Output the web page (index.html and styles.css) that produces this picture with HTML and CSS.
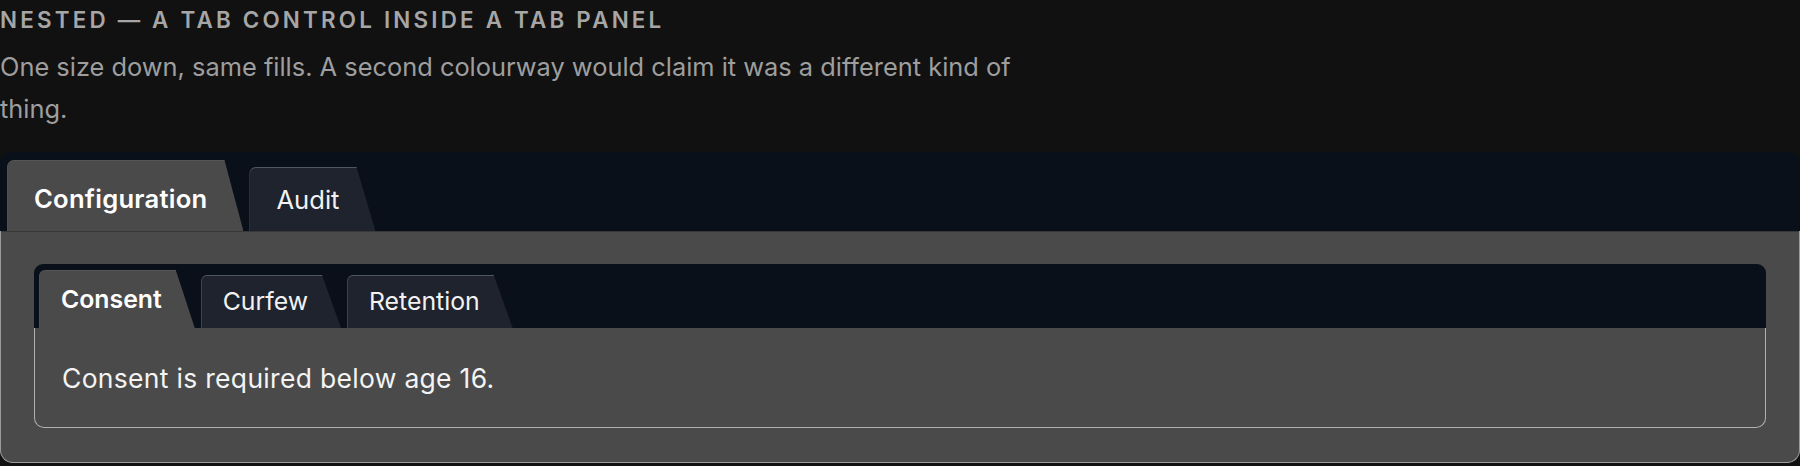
FILE: index.html
```html
<!DOCTYPE html>
<html lang="en">
<head>
<meta charset="utf-8">
<title>Nested tabs</title>
<link rel="stylesheet" href="styles.css">
</head>
<body>
<section class="demo">
  <h2 class="demo-title">Nested — a tab control inside a tab panel</h2>
  <p class="demo-text">One size down, same fills. A second colourway would claim it was a different kind of thing.</p>

  <div class="tabs">
    <div class="tablist" role="tablist">
      <button class="tab active" role="tab" aria-selected="true">Configuration</button>
      <button class="tab" role="tab" aria-selected="false">Audit</button>
    </div>
    <div class="panel" role="tabpanel">
      <div class="tabs tabs-sm">
        <div class="tablist" role="tablist">
          <button class="tab active" role="tab" aria-selected="true">Consent</button>
          <button class="tab" role="tab" aria-selected="false">Curfew</button>
          <button class="tab" role="tab" aria-selected="false">Retention</button>
        </div>
        <div class="panel" role="tabpanel">
          <p class="panel-text">Consent is required below age 16.</p>
        </div>
      </div>
    </div>
  </div>
</section>
</body>
</html>
```

FILE: styles.css
```css
* { box-sizing: border-box; }

html, body {
  margin: 0;
  padding: 0;
  background: #111111;
}

body {
  font-family: Inter, "Noto Sans", sans-serif;
  color: #eeeeee;
}

.demo {
  width: 1800px;
}

.demo-title {
  margin: 0;
  padding-top: 6px;
  font-size: 22.4px;
  line-height: 28px;
  font-weight: 600;
  letter-spacing: 3.2px;
  text-transform: uppercase;
  color: #a6a6a6;
}

.demo-text {
  margin: 12px 0 0;
  max-width: 1040px;
  font-size: 25.4px;
  line-height: 42px;
  color: #9e9e9e;
}

.tabs {
  margin-top: 22px;
}

.tablist {
  display: flex;
  align-items: flex-end;
  gap: 6px;
  height: 79px;
  padding: 0 6px 0 7px;
  background: #0a1019;
  border-radius: 10px 10px 0 0;
}

.tab {
  display: flex;
  align-items: flex-end;
  height: 64px;
  margin: 0;
  padding: 0 36px 18px 26px;
  font-family: inherit;
  font-size: 25.6px;
  line-height: 1;
  font-weight: 400;
  color: #f2f2f2;
  background: #1f232d;
  border: 0;
  border-top: 1px solid #505663;
  border-left: 1px solid #3d434e;
  border-top-left-radius: 7px;
  clip-path: polygon(0 0, calc(100% - 19px) 0, 100% 100%, 0 100%);
  cursor: pointer;
}

.tab.active {
  height: 71px;
  padding-bottom: 19px;
  font-weight: 600;
  letter-spacing: 0.25px;
  color: #ffffff;
  background: #4a4a4a;
  border-top-color: #555555;
  border-left-color: #505050;
}

.panel {
  background: #4a4a4a;
  border: 1px solid #9c9c9c;
  border-top: 0;
  border-radius: 0 0 13px 13px;
  padding: 33px 33px 34px 33px;
  box-shadow: inset 0 1px 0 #383838;
}

.tabs-sm {
  margin-top: 0;
}

.tabs-sm .tablist {
  height: 64px;
  gap: 6px;
  padding: 0 5px;
  border-radius: 9px 9px 0 0;
}

.tabs-sm .tab {
  height: 53px;
  padding: 0 33px 14px 21px;
  font-size: 24.8px;
  border-top-left-radius: 6px;
}

.tabs-sm .tab.active {
  height: 58px;
  padding-bottom: 16px;
  letter-spacing: 0;
}

.tabs-sm .panel {
  border-color: #b0b0b0;
  border-radius: 0 0 10px 10px;
  padding: 31px 27px 30px 27px;
  box-shadow: none;
}

.panel-text {
  margin: 0;
  font-size: 26.5px;
  line-height: 38.4px;
  letter-spacing: 0.3px;
  color: #f4f4f4;
}
```
